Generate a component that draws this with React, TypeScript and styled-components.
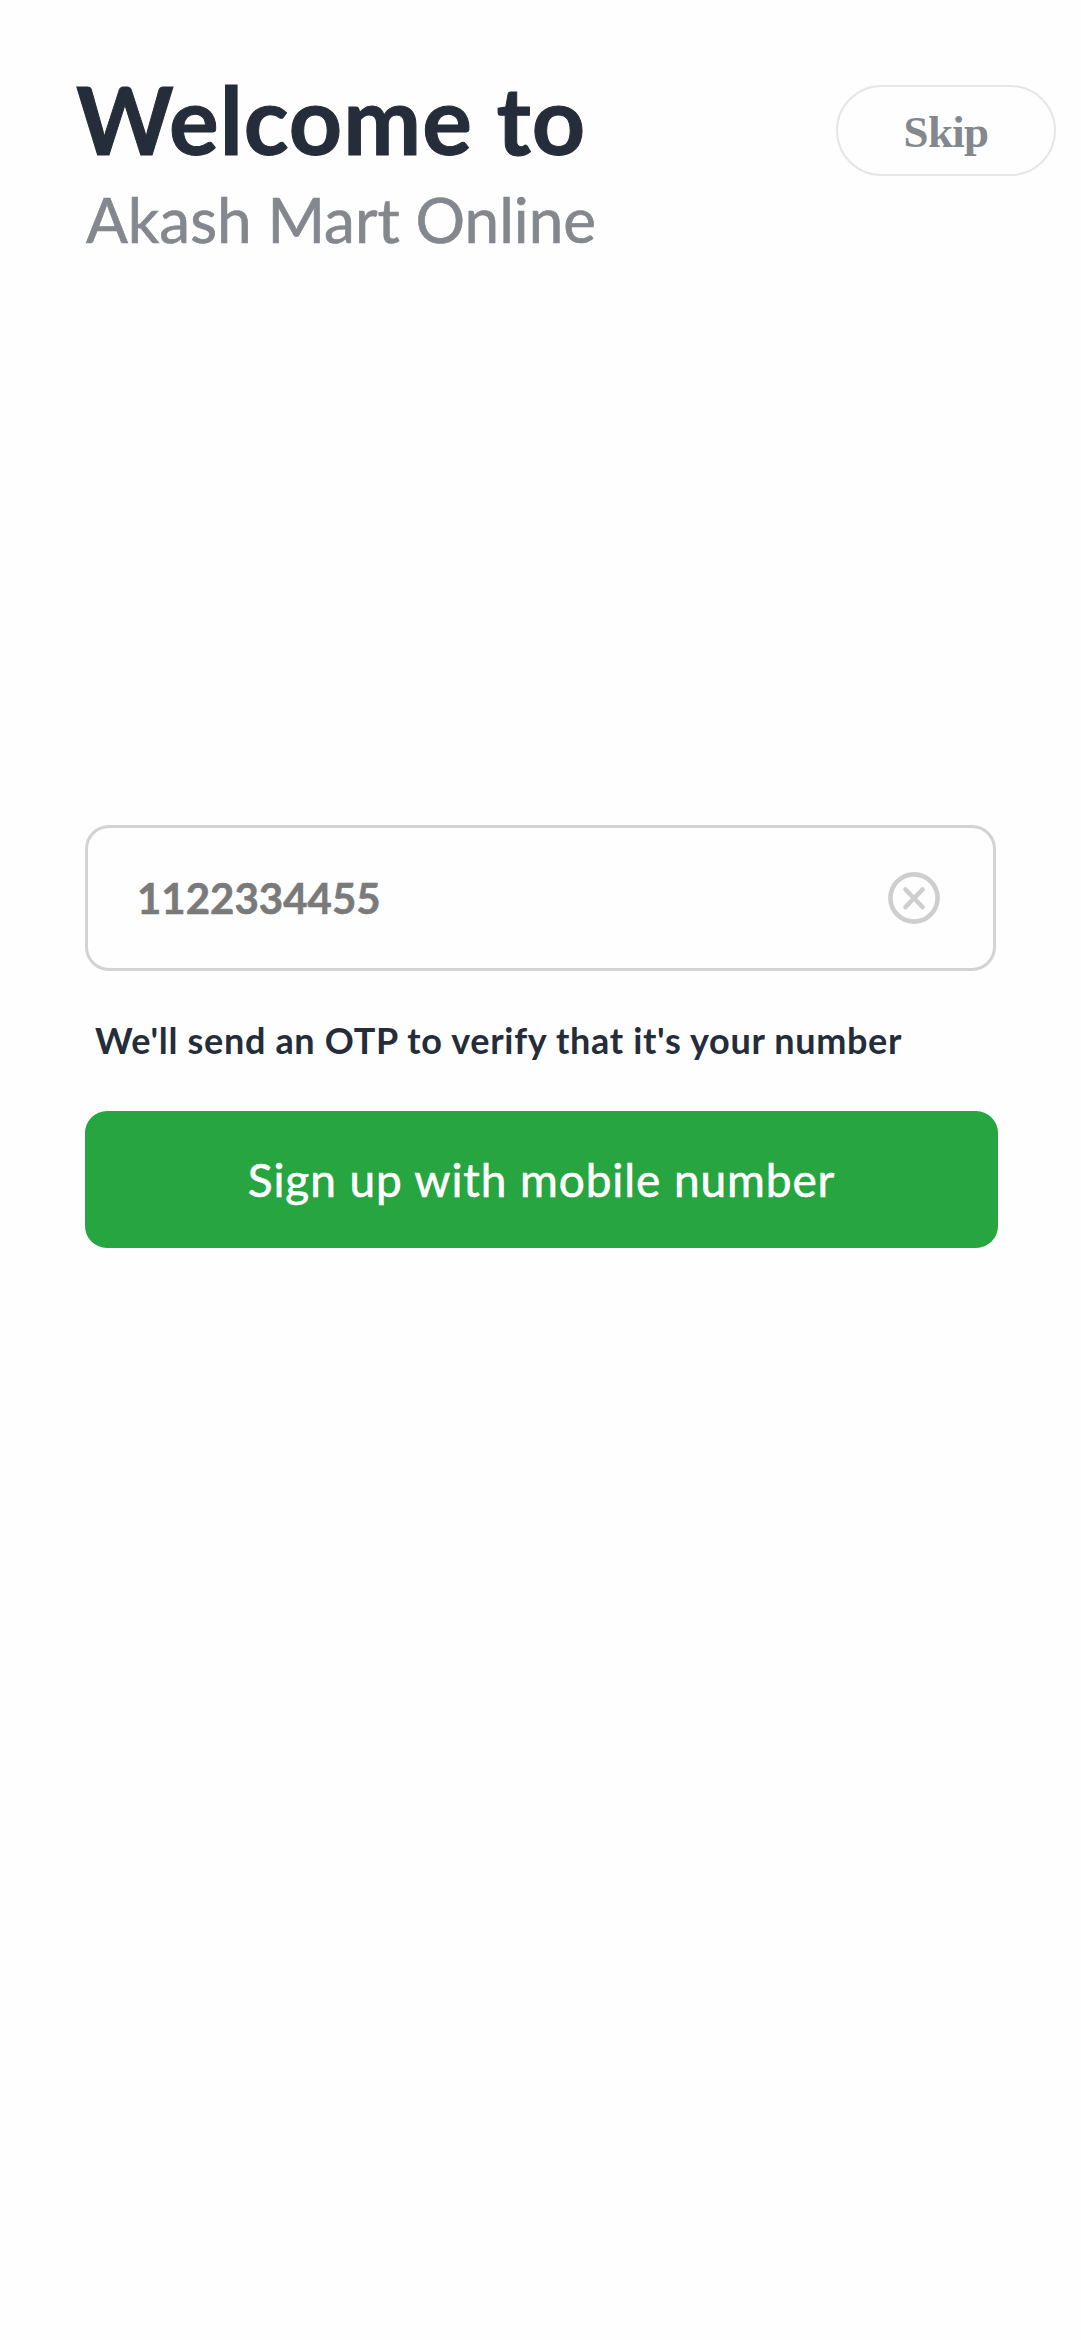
import React, { useState } from "react";
import styled, { createGlobalStyle } from "styled-components";

const GlobalStyle = createGlobalStyle`
  *, *::before, *::after { box-sizing: border-box; }
  body { margin: 0; background: #fefefe; }
  button, input { font: inherit; margin: 0; }
`;

const Screen = styled.main`
  display: flex;
  flex-direction: column;
  width: 1081px;
  min-height: 2340px;
  background: #fefefe;
  font-family: Lato, "Liberation Sans", sans-serif;
`;

const Header = styled.header`
  display: flex;
  justify-content: space-between;
  align-items: flex-start;
  height: 825px;
  padding: 64px 25px 0 76px;
`;

const Heading = styled.div`
  display: flex;
  flex-direction: column;
  white-space: nowrap;
`;

const Title = styled.h1`
  margin: 0;
  color: #242d39;
  font-size: 93px;
  font-weight: 700;
  line-height: 110px;
  letter-spacing: 1px;
  -webkit-text-stroke: 1px currentColor;
`;

const StoreName = styled.p`
  margin: 0;
  padding: 1px 0 0 10px;
  color: #84888e;
  font-size: 62px;
  font-weight: 400;
  line-height: 88px;
  -webkit-text-stroke: 0.7px currentColor;
`;

const SkipButton = styled.button`
  width: 220px;
  height: 91px;
  margin-top: 21px;
  padding: 2px 0 0;
  border: 2px solid #e6e6e6;
  border-radius: 46px;
  background: transparent;
  color: #84888e;
  font-family: "Liberation Serif", serif;
  font-size: 45px;
  font-weight: 700;
  letter-spacing: -0.7px;
`;

const Form = styled.form`
  display: flex;
  flex-direction: column;
  width: 913px;
  margin-left: 85px;
`;

const Field = styled.div`
  display: flex;
  align-items: center;
  justify-content: space-between;
  width: 911px;
  height: 146px;
  padding: 0 53px 0 49px;
  border: 3px solid #d3d3d3;
  border-radius: 24px;
`;

const PhoneInput = styled.input`
  width: 500px;
  padding: 0;
  border: 0;
  outline: 0;
  background: transparent;
  color: #7a7a7a;
  font-size: 42px;
  font-weight: 700;
  line-height: 56px;
  -webkit-text-stroke: 0.6px currentColor;
`;

const ClearButton = styled.button`
  display: flex;
  padding: 0;
  border: 0;
  background: none;
  color: #cecece;
`;

const Hint = styled.p`
  margin: 0;
  height: 140px;
  padding: 44px 0 0 10px;
  color: #242d39;
  font-size: 36px;
  font-weight: 700;
  line-height: 50px;
  letter-spacing: 0.68px;
  white-space: nowrap;
`;

const SubmitButton = styled.button`
  height: 137px;
  padding: 0;
  border: 0;
  border-radius: 22px;
  background: #26a541;
  color: #fff;
  font-size: 46px;
  font-weight: 400;
  letter-spacing: 0.9px;
  -webkit-text-stroke: 0.6px currentColor;
`;

export default function App() {
  const [phone, setPhone] = useState("1122334455");

  return (
    <>
      <GlobalStyle />
      <Screen>
        <Header>
          <Heading>
            <Title>Welcome to</Title>
            <StoreName>Akash Mart Online</StoreName>
          </Heading>
          <SkipButton type="button">Skip</SkipButton>
        </Header>
        <Form onSubmit={(event) => event.preventDefault()}>
          <Field>
            <PhoneInput
              type="tel"
              value={phone}
              onChange={(event) => setPhone(event.target.value)}
            />
            <ClearButton type="button" onClick={() => setPhone("")}>
              <svg width="52" height="52" viewBox="0 0 52 52" fill="none" stroke="currentColor" strokeWidth="4.6" strokeLinecap="round">
                <circle cx="26" cy="26" r="23.6" />
                <path d="M17.5 17.5 34.5 35M34.5 17.5 17.5 35" />
              </svg>
            </ClearButton>
          </Field>
          <Hint>We'll send an OTP to verify that it's your number</Hint>
          <SubmitButton type="submit">Sign up with mobile number</SubmitButton>
        </Form>
      </Screen>
    </>
  );
}
